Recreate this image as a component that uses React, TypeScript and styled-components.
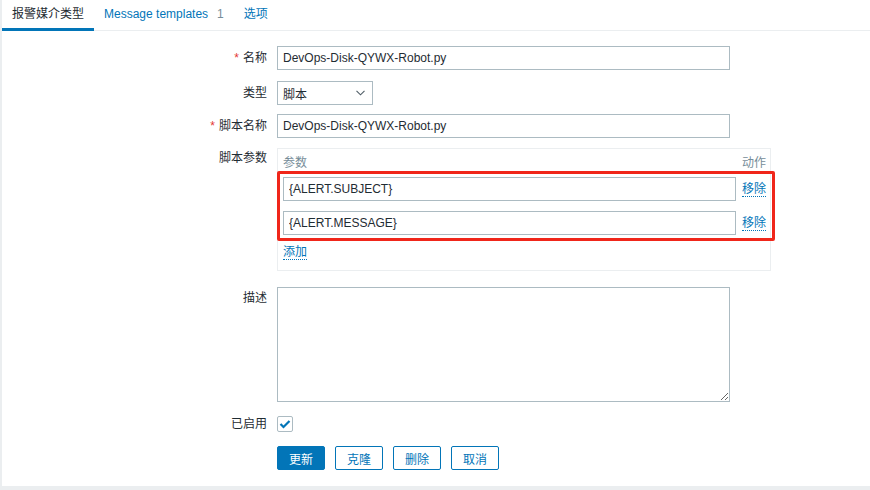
import React from "react";
import styled, { createGlobalStyle } from "styled-components";

const GlobalStyle = createGlobalStyle`
  html, body {
    margin: 0;
    padding: 0;
    background: #ebeef0;
  }
  body {
    font-family: "Liberation Sans", Arial, "Noto Sans CJK SC", sans-serif;
    font-size: 12px;
    color: #1f2c33;
  }
  * {
    box-sizing: border-box;
  }
`;

const Page = styled.div`
  margin-left: 2px;
  height: 486px;
  background: #fff;
  overflow: hidden;
`;

const TabBar = styled.div`
  display: flex;
  height: 31px;
  border-bottom: 1px solid #ebeef0;
`;

const Tab = styled.div<{ $active?: boolean }>`
  padding: 0 10px;
  height: 31px;
  line-height: 29px;
  font-size: 12px;
  color: ${(p) => (p.$active ? "#1f2c33" : "#0275b8")};
  border-bottom: 3px solid ${(p) => (p.$active ? "#0275b8" : "transparent")};
  white-space: nowrap;
  margin-bottom: -1px;
`;

const Count = styled.span`
  color: #768d99;
  margin-left: 9px;
`;

const Form = styled.div`
  display: flex;
  flex-direction: column;
  padding-top: 15px;
`;

const Row = styled.div<{ $top: number }>`
  display: flex;
  margin-top: ${(p) => p.$top}px;
`;

const Label = styled.div<{ $align?: string }>`
  width: 275px;
  flex: none;
  padding-right: 10px;
  text-align: right;
  line-height: ${(p) => p.$align || "24px"};
  font-size: 12px;
  color: #1f2c33;
`;

const Star = styled.span`
  color: #e33734;
  margin-right: 4px;
`;

const TextInput = styled.input<{ $w: number }>`
  width: ${(p) => p.$w}px;
  height: 24px;
  border: 1px solid #acbbc2;
  padding: 0 5px;
  font-family: inherit;
  font-size: 12px;
  color: #1f2c33;
  background: #fff;
  outline: none;
`;

const Select = styled.div`
  width: 96px;
  height: 24px;
  border: 1px solid #acbbc2;
  padding: 0 7px 0 5px;
  display: flex;
  align-items: center;
  justify-content: space-between;
  font-size: 12px;
  color: #1f2c33;
`;

const ParamTable = styled.div`
  position: relative;
  width: 494px;
  border: 1px solid #ebeef0;
  padding: 7px 4px 11px 5px;
`;

const ParamHead = styled.div`
  display: flex;
  justify-content: space-between;
  color: #768d99;
  line-height: 15px;
  margin-bottom: 6px;
`;

const ParamRow = styled.div`
  display: flex;
  align-items: center;
  justify-content: space-between;
  margin-bottom: 10px;
`;

const Link = styled.a`
  color: #0275b8;
  text-decoration: none;
  border-bottom: 1px dotted #0275b8;
  line-height: 14px;
  cursor: pointer;
`;

const Highlight = styled.div`
  position: absolute;
  left: -1px;
  top: 22px;
  width: 498px;
  height: 70px;
  border: 3px solid #f0261a;
  border-radius: 2px;
  pointer-events: none;
`;

const TextArea = styled.textarea`
  width: 453px;
  height: 115px;
  border: 1px solid #acbbc2;
  font-family: inherit;
  font-size: 12px;
  outline: none;
  resize: both;
`;

const Check = styled.div`
  width: 16px;
  height: 16px;
  border: 1px solid #acbbc2;
  border-radius: 2px;
  display: flex;
  align-items: center;
  justify-content: center;
`;

const Buttons = styled.div`
  display: flex;
  gap: 10px;
`;

const Button = styled.button<{ $primary?: boolean }>`
  width: 48px;
  height: 24px;
  border: 1px solid #0275b8;
  border-radius: 2px;
  background: ${(p) => (p.$primary ? "#0275b8" : "#fff")};
  color: ${(p) => (p.$primary ? "#fff" : "#0275b8")};
  font-family: inherit;
  font-size: 12px;
  padding: 0;
`;

export default function App() {
  return (
    <>
      <GlobalStyle />
      <Page>
        <TabBar>
          <Tab $active>报警媒介类型</Tab>
          <Tab>
            Message templates<Count>1</Count>
          </Tab>
          <Tab>选项</Tab>
        </TabBar>
        <Form>
          <Row $top={0}>
            <Label>
              <Star>*</Star>名称
            </Label>
            <TextInput $w={453} defaultValue="DevOps-Disk-QYWX-Robot.py" />
          </Row>
          <Row $top={11}>
            <Label>类型</Label>
            <Select>
              <span>脚本</span>
              <svg width="9" height="6" viewBox="0 0 9 6">
                <path d="M0.5 0.8 L4.5 4.8 L8.5 0.8" fill="none" stroke="#4f5d66" strokeWidth="1.1" />
              </svg>
            </Select>
          </Row>
          <Row $top={9}>
            <Label>
              <Star>*</Star>脚本名称
            </Label>
            <TextInput $w={453} defaultValue="DevOps-Disk-QYWX-Robot.py" />
          </Row>
          <Row $top={10}>
            <Label $align="20px">脚本参数</Label>
            <ParamTable>
              <ParamHead>
                <span>参数</span>
                <span>动作</span>
              </ParamHead>
              <ParamRow>
                <TextInput $w={453} defaultValue="{ALERT.SUBJECT}" />
                <Link>移除</Link>
              </ParamRow>
              <ParamRow>
                <TextInput $w={453} defaultValue="{ALERT.MESSAGE}" />
                <Link>移除</Link>
              </ParamRow>
              <div>
                <Link>添加</Link>
              </div>
              <Highlight />
            </ParamTable>
          </Row>
          <Row $top={16}>
            <Label $align="22px">描述</Label>
            <TextArea />
          </Row>
          <Row $top={14}>
            <Label $align="17px">已启用</Label>
            <Check>
              <svg width="12" height="10" viewBox="0 0 12 10">
                <path d="M1.5 5 L4.5 8 L10.5 2" fill="none" stroke="#0275b8" strokeWidth="2.2" />
              </svg>
            </Check>
          </Row>
          <Row $top={13}>
            <Label />
            <Buttons>
              <Button $primary>更新</Button>
              <Button>克隆</Button>
              <Button>删除</Button>
              <Button>取消</Button>
            </Buttons>
          </Row>
        </Form>
      </Page>
    </>
  );
}
